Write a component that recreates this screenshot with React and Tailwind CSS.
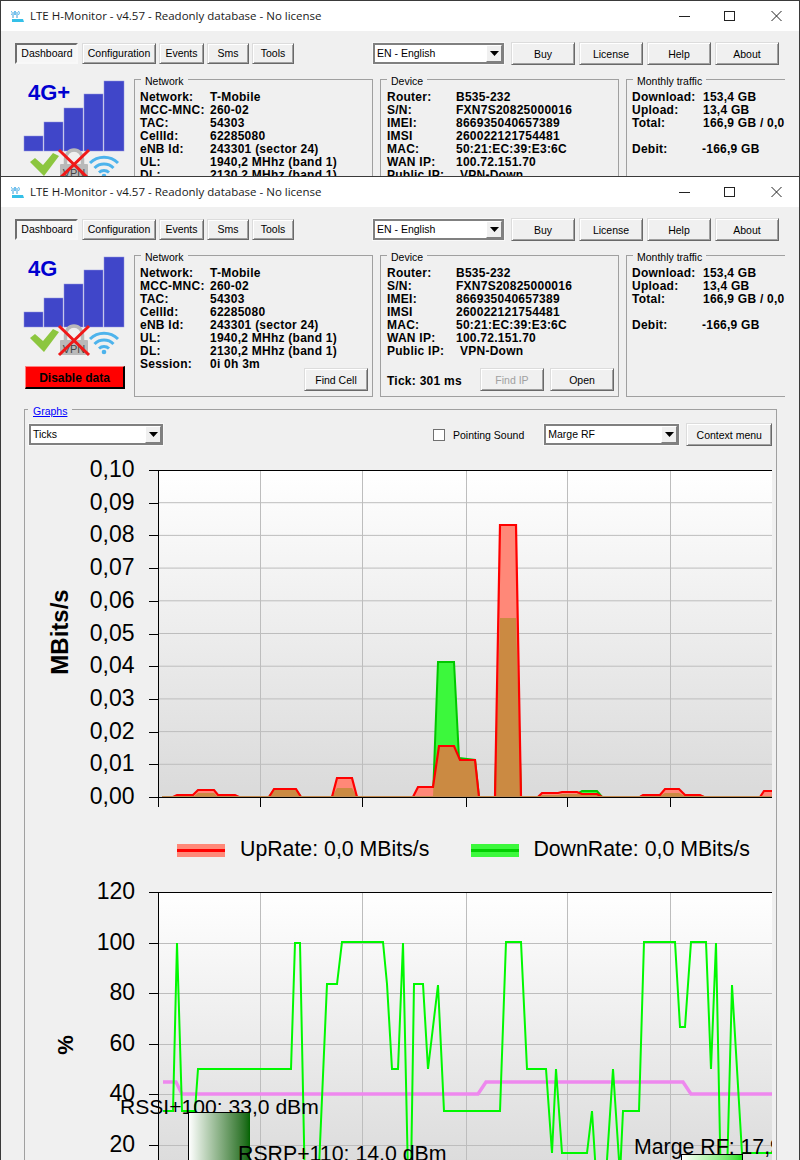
import React from "react";

const baseBtn =
  "flex items-center justify-center bg-[#f0f0f0] border border-t-[#dcdcdc] border-l-[#dcdcdc] border-r-[#696969] border-b-[#696969] shadow-[inset_1px_1px_0_#ffffff,inset_-1px_-1px_0_#a0a0a0] text-[10.5px] leading-none";

function Btn({ w, small, children, disabled }) {
  return (
    <div className={`${baseBtn} ${w} ${small ? "h-[21px]" : "h-[23px] pt-[1px]"} shrink-0 ${disabled ? "text-[#a0a0a0]" : "text-black"}`}>{children}</div>
  );
}

function Combo({ w, children }) {
  return (
    <div className={`${w} h-[21px] shrink-0 flex items-stretch bg-white border-2 border-t-[#808080] border-l-[#808080] border-r-[#808080] border-b-[#808080] outline outline-1 outline-[#f8f8f8] text-[10.5px]`}>
      <div className="flex-1 pl-[2px] flex items-center">{children}</div>
      <div className="w-[16px] bg-[#f0f0f0] border border-t-white border-l-white border-r-[#808080] border-b-[#808080] flex items-center justify-center">
        <svg width="9" height="5" viewBox="0 0 9 5"><polygon points="0,0 9,0 4.5,5" fill="#000" /></svg>
      </div>
    </div>
  );
}

function Group({ title, w, open, children }) {
  return (
    <div className={`${w} h-[142px] shrink-0 relative flex flex-col border border-[#a0a0a0] ${open ? "border-r-0" : ""}`}>
      <span className="absolute -top-[5px] left-[6px] px-[4px] bg-[#f0f0f0] text-[10.5px] leading-[12px]">{title}</span>
      {children}
    </div>
  );
}

function Rows({ rows, label, pl }) {
  return (
    <div className={`pt-[11px] ${pl} font-bold text-[12px] tracking-[0.25px] leading-[13px] overflow-hidden whitespace-nowrap`}>
      {rows.map(([a, b], i) => (
        <div key={i} className="flex h-[13px]">
          <div className={`${label} shrink-0`}>{a}</div>
          <div>{b}</div>
        </div>
      ))}
    </div>
  );
}

function Indicator({ tech }) {
  const bars = [
    [24, 312, 19],
    [44, 298, 19],
    [64, 284, 19],
    [84, 270, 19],
    [104, 257, 20],
  ];
  return (
    <svg width="133" height="105" viewBox="1 255 133 105" className="block">
      {bars.map(([x, y, w], i) => (
        <rect key={i} x={x} y={y} width={w} height={327 - y} fill="#4046c9" stroke="#8f93de" strokeWidth="0.5" />
      ))}
      <text x="28" y="276" fontSize="22" fontWeight="700" fill="#0000d0" fontFamily="Liberation Sans">{tech}</text>
      <polygon points="30,338 35,334 43,341 53,329 59,332 44,352" fill="#8cc63f" />
      <path d="M65.5 341 V335 a8.5 9 0 0 1 17 0 V341" fill="none" stroke="#b9b9b9" strokeWidth="3.5" />
      <rect x="60" y="340" width="28" height="15" rx="1" fill="#b9b9b9" />
      <text x="74" y="353" fontSize="11" textAnchor="middle" fill="#444" fontFamily="Liberation Sans">VPN</text>
      <path d="M59 326 L89 355 M89 326 L59 355" stroke="#f01818" strokeWidth="3" fill="none" />
      <path d="M90 339 a20 20 0 0 1 28 0 M94.5 344 a13.5 13.5 0 0 1 19 0 M99 348.5 a7.5 7.5 0 0 1 10 0" fill="none" stroke="#4db3ec" strokeWidth="3" />
      <circle cx="104" cy="352" r="2.3" fill="#4db3ec" />
    </svg>
  );
}

function TitleBar() {
  return (
    <div className="h-[30px] bg-white flex items-center shrink-0">
      <svg width="14" height="14" viewBox="0 0 14 14" className="ml-[10px] mt-[1px]">
        <path d="M2 2 v6 M6 2 v6" stroke="#3b9ed8" strokeWidth="1" />
        <path d="M0.5 1 a3 3 0 0 0 0 4 M3.5 1 a3 3 0 0 1 0 4 M4.5 1 a3 3 0 0 0 0 4 M7.5 1 a3 3 0 0 1 0 4" stroke="#4db3ec" strokeWidth="1" fill="none" />
        <path d="M1 9 H12 L13 12 H1 Z" fill="#35c0e8" />
      </svg>
      <span className="ml-[5px] font-['Open_Sans'] text-[11.5px] text-[#1a1a1a] leading-none">LTE H-Monitor - v4.57 - Readonly database - No license</span>
      <div className="ml-auto flex items-center">
        <svg width="46" height="30" viewBox="0 0 46 30"><line x1="18" x2="29" y1="15.5" y2="15.5" stroke="#222" /></svg>
        <svg width="46" height="30" viewBox="0 0 46 30"><rect x="17.5" y="10.5" width="10" height="9" stroke="#222" fill="none" /></svg>
        <svg width="45" height="30" viewBox="0 0 45 30" className="mr-[1px]"><path d="M18.5 10 L28.5 20 M28.5 10 L18.5 20" stroke="#222" fill="none" /></svg>
      </div>
    </div>
  );
}

function Toolbar({ lang }) {
  return (
    <div className="flex items-center h-[23px] mt-[11px] pl-[14px]">
      <div className="w-[63px] h-[21px] shrink-0 flex items-center justify-center pl-[1px] pt-[1px] border-2 border-t-[#6e6e6e] border-l-[#6e6e6e] border-r-[#f8f8f8] border-b-[#f8f8f8] bg-[#f6f6f6] text-[10.5px]">Dashboard</div>
      <div className="flex ml-[4px] gap-[3px]">
        <Btn w="w-[74px]" small>Configuration</Btn>
        <Btn w="w-[45px]" small>Events</Btn>
        <Btn w="w-[42px]" small>Sms</Btn>
        <Btn w="w-[42px]" small>Tools</Btn>
      </div>
      <div className="ml-[79px]"><Combo w="w-[131px]"><span className="mt-[1px]">{lang}</span></Combo></div>
      <div className="flex ml-[7px] gap-[4px]">
        <Btn w="w-[64px]">Buy</Btn>
        <Btn w="w-[64px]">License</Btn>
        <Btn w="w-[64px]">Help</Btn>
        <Btn w="w-[64px]">About</Btn>
      </div>
    </div>
  );
}

const netRows = [
  ["Network:", "T-Mobile"],
  ["MCC-MNC:", "260-02"],
  ["TAC:", "54303"],
  ["CellId:", "62285080"],
  ["eNB Id:", "243301 (sector 24)"],
  ["UL:", "1940,2 MHhz (band 1)"],
  ["DL:", "2130,2 MHhz (band 1)"],
  ["Session:", "0j 0h 3m"],
];
const devRows = [
  ["Router:", "B535-232"],
  ["S/N:", "FXN7S20825000016"],
  ["IMEI:", "866935040657389"],
  ["IMSI", "260022121754481"],
  ["MAC:", "50:21:EC:39:E3:6C"],
  ["WAN IP:", "100.72.151.70"],
  ["Public IP:", <span className="pl-[4px]">VPN-Down</span>],
];
const trafRows = [
  ["Download:", "153,4 GB"],
  ["Upload:", "13,4 GB"],
  ["Total:", "166,9 GB / 0,0 GB"],
  ["\u00a0", ""],
  ["Debit:", <span className="-ml-[1px]">-166,9 GB</span>],
];

function Panels({ tech }) {
  return (
    <div className="flex mt-[14px]">
      <div className="w-[133px] shrink-0 h-[142px] flex flex-col">
        <Indicator tech={tech} />
        <div className="ml-[24px] mt-[6px] w-[100px] h-[23px] flex items-center justify-center pt-[1px] bg-[#ff0000] border border-t-[#ff8080] border-l-[#ff8080] border-r-black border-b-black border-r-2 border-b-2 font-bold text-[12px]">Disable data</div>
      </div>
      <Group title="Network" w="w-[239px]">
        <Rows rows={netRows} label="w-[70px]" pl="pl-[5px]" />
        <div className="mt-auto mb-[5px] mr-[4px] flex justify-end">
          <Btn w="w-[64px]">Find Cell</Btn>
        </div>
      </Group>
      <div className="w-[7px] shrink-0" />
      <Group title="Device" w="w-[239px]">
        <Rows rows={devRows} label="w-[69px]" pl="pl-[6px]" />
        <div className="mt-auto mb-[5px] mr-[4px] ml-[6px] flex items-center">
          <span className="font-bold text-[12px] tracking-[0.25px] pt-[2px]">Tick: 301 ms</span>
          <div className="ml-auto flex gap-[6px]">
            <Btn w="w-[64px]" disabled>Find IP</Btn>
            <Btn w="w-[64px]">Open</Btn>
          </div>
        </div>
      </Group>
      <div className="w-[7px] shrink-0" />
      <Group title="Monthly traffic" w="w-[159px]" open>
        <Rows rows={trafRows} label="w-[71px]" pl="pl-[5px]" />
      </Group>
    </div>
  );
}

const redPts = "162,797 173,797 177,795 193,795 198,790 214,790 218,795 235,795 239,797 269,797 274,789 296,789 301,797 332,797 337,778 352,778 357,797 413,797 418,787 433,787 439,746 454,746 460,760 475,760 479,797 495,797 500,525 516,525 521,797 538,797 542,793 558,793 562,792 577,792 582,794 597,794 602,797 640,797 643,795 660,795 665,789 679,789 685,795 700,795 704,797 760,797 764,791 772,791";
const greenPts = "162,797 193,797 198,793 214,793 218,797 269,797 274,790 296,790 301,797 332,797 337,788 352,788 357,797 433,797 438,662 454,662 459,758 475,760 479,797 495,797 500,618 516,618 521,797 538,797 542,795 558,795 562,794 577,794 582,791 597,791 602,797 640,797 643,796 660,796 665,793 679,793 685,796 700,796 704,797 772,797";
const closePoly = (p) => `162,797 ${p} 772,797`;

const downPts = "163,1111 173,1111 177,943 182,1111 195,1111 198,1069 291,1069 295,943 300,943 305,1190 318,1190 327,984 337,984 342,942 383,942 387,984 392,1069 398,1069 403,943 408,1175 411,1175 414,984 423,984 428,1069 438,985 444,1111 500,1111 506,942 521,942 527,1069 546,1069 552,1153 556,1069 562,1153 587,1153 592,1111 597,1190 605,1190 613,1069 620,1175 623,1111 639,1111 644,942 675,942 680,1027 685,1027 691,942 706,942 711,1069 716,943 721,1190 727,1175 732,985 742,1153 772,1153";
const rfPts = "163,1082 176,1082 182,1094 478,1094 486,1082 683,1082 691,1094 772,1094";

const vGrid = [260, 362, 466, 567, 670];

function Chart1() {
  const ys = [470, 502.7, 535.4, 568.1, 600.8, 633.5, 666.2, 698.9, 731.6, 764.3, 797];
  const labels = ["0,10", "0,09", "0,08", "0,07", "0,06", "0,05", "0,04", "0,03", "0,02", "0,01", "0,00"];
  return (
    <svg width="751" height="390" viewBox="25 446 751 390" className="block" fontFamily="Liberation Sans">
      <defs>
        <linearGradient id="bg1" x1="0" y1="0" x2="0" y2="1">
          <stop offset="0" stopColor="#ffffff" />
          <stop offset="1" stopColor="#dadada" />
        </linearGradient>
        <clipPath id="redClip"><polygon points={closePoly(redPts)} /></clipPath>
      </defs>
      <rect x="158" y="470" width="614" height="327" fill="url(#bg1)" />
      {ys.slice(1, 10).map((y) => <line key={y} x1="158" x2="772" y1={y} y2={y} stroke="#bdbdbd" />)}
      {vGrid.map((x) => <line key={x} x1={x + 0.5} x2={x + 0.5} y1="470" y2="797" stroke="#bdbdbd" />)}
      <polygon points={closePoly(greenPts)} fill="#3cf83c" />
      <polyline points={greenPts} fill="none" stroke="#00c800" strokeWidth="2" />
      <polygon points={closePoly(redPts)} fill="#ff8878" />
      <polygon points={closePoly(greenPts)} fill="#cb8a42" clipPath="url(#redClip)" />
      <polyline points={redPts} fill="none" stroke="#ff0000" strokeWidth="2.2" />
      <line x1="162" x2="772" y1="796.5" y2="796.5" stroke="#c08a50" />
      {ys.map((y, i) => (
        <g key={y}>
          <line x1="149" x2={i === 0 ? 772 : 158} y1={i === 0 ? 470.5 : Math.round(y) + 0.5} y2={i === 0 ? 470.5 : Math.round(y) + 0.5} stroke="#000" />
          <text x="134.5" y={y + 7} fontSize="23" textAnchor="end" fill="#000">{labels[i]}</text>
        </g>
      ))}
      <line x1="158.5" x2="158.5" y1="470" y2="807" stroke="#000" />
      <line x1="149" x2="772" y1="797.5" y2="797.5" stroke="#000" />
      {vGrid.map((x) => <line key={x} x1={x + 0.5} x2={x + 0.5} y1="797" y2="807" stroke="#000" />)}
      <text transform="translate(68,632) rotate(-90)" fontSize="24" fontWeight="700" textAnchor="middle" fill="#000">MBits/s</text>
    </svg>
  );
}

function Swatch({ fill, line }) {
  return (
    <div className={`w-[48px] h-[13px] shrink-0 flex items-center ${fill}`}>
      <div className={`w-full h-[3px] ${line}`} />
    </div>
  );
}

function Legend() {
  return (
    <div className="h-[26px] pt-[2px] flex items-center text-[21.3px] pl-[152px] whitespace-nowrap">
      <Swatch fill="bg-[#ff8878]" line="bg-[#ff0000]" />
      <span className="ml-[15px]">UpRate: 0,0 MBits/s</span>
      <div className="ml-[42px]"><Swatch fill="bg-[#3cf83c]" line="bg-[#00d000]" /></div>
      <span className="ml-[14px]">DownRate: 0,0 MBits/s</span>
    </div>
  );
}

function Chart2() {
  const ys = [892, 943, 993, 1044, 1094, 1145];
  const labels = ["120", "100", "80", "60", "40", "20"];
  return (
    <div className="relative h-[300px] text-[21.3px] leading-[24px] whitespace-nowrap">
      <svg width="751" height="320" viewBox="25 862 751 320" className="block" fontFamily="Liberation Sans">
        <defs>
          <linearGradient id="bg2" x1="0" y1="0" x2="0" y2="1">
            <stop offset="0" stopColor="#ffffff" />
            <stop offset="1" stopColor="#d8d8d8" />
          </linearGradient>
        </defs>
        <rect x="158" y="892" width="614" height="300" fill="url(#bg2)" />
        {ys.slice(1).map((y) => <line key={y} x1="158" x2="772" y1={y + 0.5} y2={y + 0.5} stroke="#bdbdbd" />)}
        {vGrid.map((x) => <line key={x} x1={x + 0.5} x2={x + 0.5} y1="892" y2="1192" stroke="#bdbdbd" />)}
        <polyline points={rfPts} fill="none" stroke="#ee88ee" strokeWidth="3.4" />
        <polyline points={downPts} fill="none" stroke="#00f800" strokeWidth="2" />
        {ys.map((y, i) => (
          <g key={y}>
            <line x1="149" x2={i === 0 ? 772 : 158} y1={y + 0.5} y2={y + 0.5} stroke="#000" />
            <text x="135" y={y + 7} fontSize="23" textAnchor="end" fill="#000">{labels[i]}</text>
          </g>
        ))}
        <line x1="158.5" x2="158.5" y1="892" y2="1192" stroke="#000" />
        <text transform="translate(73,1045) rotate(-90)" fontSize="22" fontWeight="700" textAnchor="middle" fill="#000">%</text>
      </svg>
      <div className="absolute left-[95px] top-[233px] text-[21.1px]">RSSI+100: 33,0 dBm</div>
      <div className="absolute left-[163px] top-[250px] w-[62px] h-[60px] border-t border-l border-black bg-gradient-to-r from-white to-[#006400]" />
      <div className="absolute left-[213px] top-[280px]">RSRP+110: 14,0 dBm</div>
      <div className="absolute left-[609px] top-[273px] w-[138px] overflow-hidden">Marge RF: 17,9 dBm</div>
      <div className="absolute left-[656px] top-[292px] w-[62px] h-[20px] border border-black bg-gradient-to-r from-white to-[#00e000]" />
    </div>
  );
}

function Graphs() {
  return (
    <div className="ml-[23px] mt-[12px] w-[753px] h-[800px] relative border border-[#a0a0a0]">
      <span className="absolute -top-[5px] left-[3px] px-[5px] bg-[#f0f0f0] text-[10.5px] leading-[12px] text-[#0000ff] underline">Graphs</span>
      <div className="flex items-center h-[23px] mt-[13px] pl-[4px]">
        <Combo w="w-[134px]">Ticks</Combo>
        <div className="ml-[270px] mt-[1px] w-[12px] h-[12px] shrink-0 border border-[#707070] bg-white" />
        <span className="ml-[8px] mt-[2px] text-[10.5px]">Pointing Sound</span>
        <div className="ml-[20px]"><Combo w="w-[135px]"><span className="mt-[1px]">Marge RF</span></Combo></div>
        <div className="ml-[7px]"><Btn w="w-[86px]">Context menu</Btn></div>
      </div>
      <Chart1 />
      <Legend />
      <Chart2 />
    </div>
  );
}

function Window({ height, tech }) {
  return (
    <div className={`${height} overflow-hidden flex flex-col bg-[#f0f0f0] border-t border-x border-[#3a3a3a]`}>
      <TitleBar />
      <Toolbar lang="EN - English" />
      <Panels tech={tech} />
      <Graphs />
    </div>
  );
}

export default function App() {
  return (
    <div className="w-[800px] h-[1160px] overflow-hidden bg-[#f0f0f0] text-black font-['Liberation_Sans',Arial,sans-serif]">
      <Window height="h-[176px]" tech="4G+" />
      <Window height="h-[984px]" tech="4G" />
    </div>
  );
}
